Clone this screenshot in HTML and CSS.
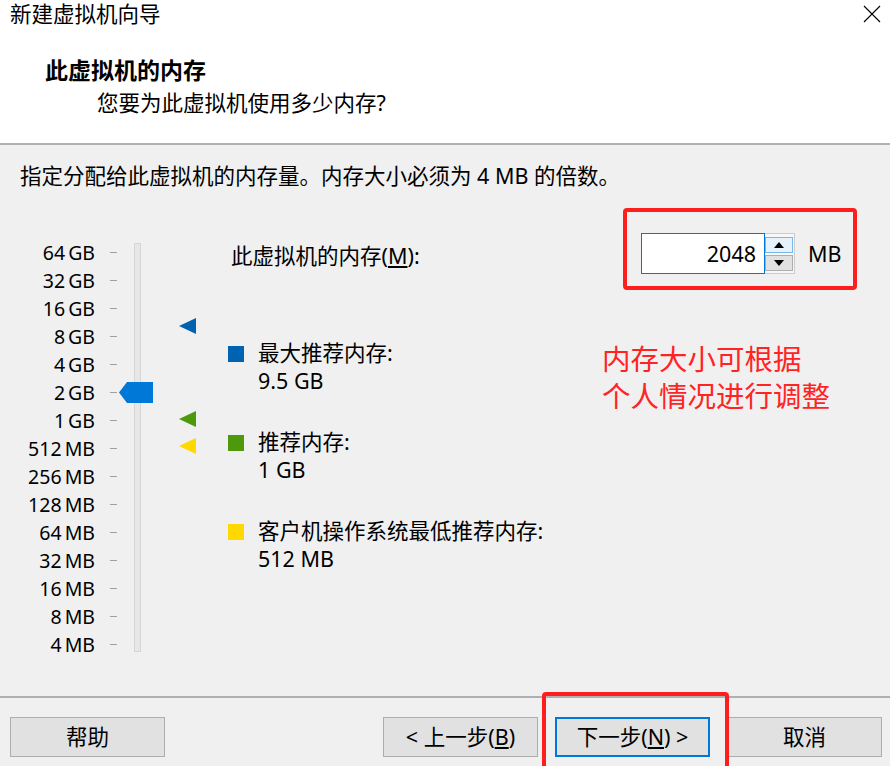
FILE: index.html
```html
<!DOCTYPE html>
<html lang="zh-CN">
<head>
<meta charset="utf-8">
<title>新建虚拟机向导</title>
<link rel="stylesheet" href="styles.css">
</head>
<body>
<div class="dialog">
  <header class="top">
    <div class="titlebar">
      <span class="title">新建虚拟机向导</span>
      <svg class="close" width="18" height="18" viewBox="0 0 18 18"><path d="M1 1L17 17M17 1L1 17" stroke="#000" stroke-width="1.1" fill="none"/></svg>
    </div>
    <div class="heading">此虚拟机的内存</div>
    <div class="subheading">您要为此虚拟机使用多少内存?</div>
  </header>

  <main class="content">
    <p class="instruction">指定分配给此虚拟机的内存量。内存大小必须为 4 MB 的倍数。</p>
    <div class="main">
      <div class="slider">
        <ul class="scale">
          <li><span>64 GB</span><i class="tick"></i></li>
          <li><span>32 GB</span><i class="tick"></i></li>
          <li><span>16 GB</span><i class="tick"></i></li>
          <li><span>8 GB</span><i class="tick"></i></li>
          <li><span>4 GB</span><i class="tick"></i></li>
          <li><span>2 GB</span><i class="tick"></i></li>
          <li><span>1 GB</span><i class="tick"></i></li>
          <li><span>512 MB</span><i class="tick"></i></li>
          <li><span>256 MB</span><i class="tick"></i></li>
          <li><span>128 MB</span><i class="tick"></i></li>
          <li><span>64 MB</span><i class="tick"></i></li>
          <li><span>32 MB</span><i class="tick"></i></li>
          <li><span>16 MB</span><i class="tick"></i></li>
          <li><span>8 MB</span><i class="tick"></i></li>
          <li><span>4 MB</span><i class="tick"></i></li>
        </ul>
        <div class="track"></div>
        <div class="markers">
          <svg class="marker" style="top:110px" viewBox="0 0 17 16"><polygon points="0,8 17,0 17,16" fill="#0063b1"/></svg>
          <svg class="marker" style="top:203px" viewBox="0 0 17 16"><polygon points="0,8 17,0 17,16" fill="#4c9a0c"/></svg>
          <svg class="marker" style="top:230px" viewBox="0 0 17 16"><polygon points="0,8 17,0 17,16" fill="#ffd800"/></svg>
        </div>
        <svg class="thumb" style="top:174px" viewBox="0 0 34 21"><polygon points="0,10.5 8,0 34,0 34,21 8,21" fill="#0078d7"/></svg>
      </div>

      <div class="settings">
        <div class="mem-row">
          <label class="mem-label">此虚拟机的内存(<u>M</u>):</label>
          <div class="highlight">
            <div class="spin">
              <input class="spin-input" type="text" value="2048" readonly>
              <div class="spin-btns">
                <span class="spin-btn up"><svg width="10" height="6" viewBox="0 0 10 6"><polygon points="0,6 5,0 10,6" fill="#000"/></svg></span>
                <span class="spin-btn down"><svg width="10" height="6" viewBox="0 0 10 6"><polygon points="0,0 10,0 5,6" fill="#000"/></svg></span>
              </div>
            </div>
            <span class="unit">MB</span>
          </div>
        </div>

        <div class="info">
          <ul class="legend">
            <li><span class="swatch blue"></span><div>最大推荐内存:<br>9.5 GB</div></li>
            <li><span class="swatch green"></span><div>推荐内存:<br>1 GB</div></li>
            <li><span class="swatch yellow"></span><div>客户机操作系统最低推荐内存:<br>512 MB</div></li>
          </ul>
          <p class="note">内存大小可根据<br>个人情况进行调整</p>
        </div>
      </div>
    </div>
  </main>

  <footer class="footer">
    <button class="btn">帮助</button>
    <div class="nav">
      <button class="btn">&lt; 上一步(<u>B</u>)</button>
      <button class="btn primary">下一步(<u>N</u>) &gt;</button>
      <button class="btn">取消</button>
    </div>
  </footer>
</div>
</body>
</html>
```

FILE: styles.css
```css
html, body {
  margin: 0;
  padding: 0;
}

body {
  background: #f0f0f0;
  font-family: "Noto Sans", "Noto Sans CJK SC", sans-serif;
  font-size: 21.5px;
  color: #000;
}

.dialog {
  width: 890px;
  height: 766px;
  overflow: hidden;
  display: flex;
  flex-direction: column;
}

/* ---------- header ---------- */
.top {
  background: #fff;
  height: 145px;
  box-sizing: border-box;
  border-bottom: 2px solid #b0b0b0;
  flex: none;
}

.titlebar {
  display: flex;
  justify-content: space-between;
  align-items: center;
  height: 28px;
  padding: 0 9px 0 10px;
}

.title {
  line-height: 28px;
}

.close {
  display: block;
}

.heading {
  margin: 27px 0 0 45px;
  line-height: 30px;
  font-size: 23px;
  font-weight: 700;
}

.subheading {
  margin: 3px 0 0 97px;
  line-height: 30px;
}

/* ---------- content ---------- */
.content {
  height: 551px;
  box-sizing: border-box;
  padding: 17px 33px 0 20px;
  flex: none;
}

.instruction {
  margin: 0;
  line-height: 28px;
}

.main {
  display: flex;
  margin-top: 18px;
}

.slider {
  display: flex;
  align-items: flex-start;
  position: relative;
  flex: none;
}

.scale {
  list-style: none;
  margin: 30px 0 0;
  padding: 0;
  width: 97px;
}

.scale li {
  display: flex;
  justify-content: flex-end;
  align-items: center;
  height: 28px;
  font-size: 19.5px;
  word-spacing: -2px;
  white-space: nowrap;
}

.tick {
  display: block;
  width: 7px;
  height: 1px;
  background: #a0a0a0;
  margin-left: 15px;
}

.track {
  width: 7px;
  height: 409px;
  margin: 35px 0 0 17px;
  box-sizing: border-box;
  background: #e7e7e7;
  border: 1px solid #d6d6d6;
}

.markers {
  position: relative;
  width: 17px;
  margin-left: 38px;
  align-self: stretch;
}

.marker {
  position: absolute;
  left: 0;
  width: 17px;
  height: 16px;
}

.thumb {
  position: absolute;
  left: 99px;
  width: 34px;
  height: 21px;
}

.settings {
  flex: 1;
  margin-left: 32px;
}

.mem-row {
  display: flex;
  justify-content: space-between;
  align-items: flex-start;
}

.mem-label {
  margin: 34px 0 0 3px;
  line-height: 28px;
}

.highlight {
  display: flex;
  align-items: center;
  width: 234px;
  box-sizing: border-box;
  border: 4px solid #ff1e1e;
  border-radius: 4px;
  padding: 21px 0 12px 14px;
}

.spin {
  display: flex;
}

.spin-input {
  width: 124px;
  height: 41px;
  box-sizing: border-box;
  border: 1px solid #0078d7;
  background: #fff;
  text-align: right;
  padding: 0 8px 0 0;
  margin: 0;
  font: inherit;
  color: #000;
  outline: none;
}

.spin-btns {
  width: 30px;
  height: 41px;
  box-sizing: border-box;
  border: 1px solid #cccccc;
  border-left: none;
  background: #f7f7f7;
  padding: 3px 1px 2px 0;
  display: flex;
  flex-direction: column;
  gap: 2px;
}

.spin-btn {
  flex: 1;
  display: flex;
  align-items: center;
  justify-content: center;
  box-sizing: border-box;
  border: 1px solid #adadad;
  background: #e1e1e1;
}

.spin-btn.up {
  background: #e5f1fb;
  border-color: #7ab6e9;
}

.spin-btn svg {
  display: block;
}

.unit {
  margin-left: 13px;
  line-height: 28px;
}

.info {
  display: flex;
  align-items: flex-start;
  margin-top: 49px;
}

.legend {
  list-style: none;
  margin: 0;
  padding: 0;
  width: 374px;
  flex: none;
  display: flex;
  flex-direction: column;
  gap: 33px;
}

.legend li {
  display: flex;
  align-items: flex-start;
  line-height: 28px;
}

.swatch {
  width: 16px;
  height: 16px;
  margin: 7px 14px 0 0;
  flex: none;
}

.swatch.blue { background: #0063b1; }
.swatch.green { background: #4c9a0c; }
.swatch.yellow { background: #ffd800; }

.note {
  margin: 2px 0 0;
  font-size: 28.5px;
  line-height: 37px;
  color: #ff2424;
  white-space: nowrap;
}

/* ---------- footer ---------- */
.footer {
  flex: 1;
  border-top: 2px solid #b0b0b0;
  display: flex;
  justify-content: space-between;
  align-items: flex-start;
  padding: 19px 8px 0 10px;
}

.nav {
  display: flex;
  gap: 17px;
}

.btn {
  width: 155px;
  height: 40px;
  box-sizing: border-box;
  border: 1px solid #adadad;
  background: #e1e1e1;
  font: inherit;
  color: #000;
  padding: 0;
  margin: 0;
  line-height: 1;
}

.btn.primary {
  border: 2px solid #0078d7;
  position: relative;
}

.btn.primary::after {
  content: "";
  position: absolute;
  left: -15px;
  right: -21px;
  top: -27px;
  bottom: -30px;
  border: 4px solid #ff1e1e;
  border-radius: 4px;
  pointer-events: none;
}
```
